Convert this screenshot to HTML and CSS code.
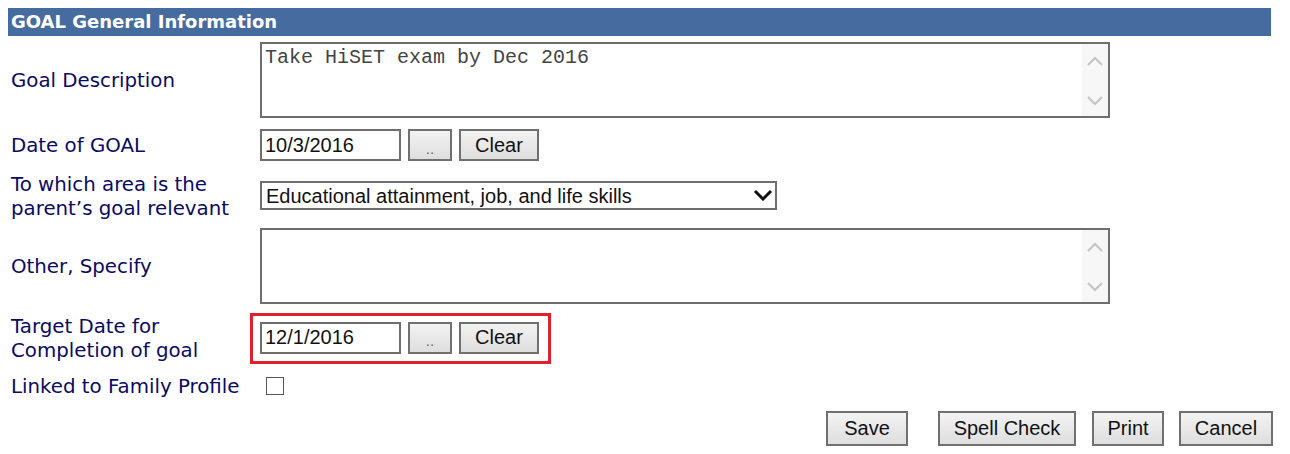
FILE: index.html
```html
<!DOCTYPE html>
<html lang="en">
<head>
  <meta charset="UTF-8" />
  <title>GOAL General Information</title>
  <link rel="stylesheet" href="styles.css">
</head>
<body>

<div class="section-head">GOAL General Information</div>

<div class="row row-desc">
  <div class="label">Goal Description</div>
  <div class="memo">
    <textarea class="memo-text">Take HiSET exam by Dec 2016</textarea>
    <div class="memo-scroll">
      <svg width="16" height="10" viewBox="0 0 16 10"><path d="M1 9 L8 2 L15 9" fill="none" stroke="#c4c4c4" stroke-width="2"/></svg>
      <svg width="16" height="10" viewBox="0 0 16 10"><path d="M1 1 L8 8 L15 1" fill="none" stroke="#c4c4c4" stroke-width="2"/></svg>
    </div>
  </div>
</div>

<div class="row row-date">
  <div class="label">Date of GOAL</div>
  <div class="date-group">
    <input type="text" class="date-input" value="10/3/2016" />
    <button class="btn btn-pick">..</button>
    <button class="btn btn-clear">Clear</button>
  </div>
</div>

<div class="row row-area">
  <div class="label">To which area is the<br>parent&#8217;s goal relevant</div>
  <div class="select-wrap">
    <select class="area-select">
      <option>Educational attainment, job, and life skills</option>
    </select>
    <svg class="select-arrow" width="20" height="12" viewBox="0 0 20 12"><path d="M2 2 L10 10 L18 2" fill="none" stroke="#111" stroke-width="3"/></svg>
  </div>
</div>

<div class="row row-other">
  <div class="label">Other, Specify</div>
  <div class="memo">
    <textarea class="memo-text"></textarea>
    <div class="memo-scroll">
      <svg width="16" height="10" viewBox="0 0 16 10"><path d="M1 9 L8 2 L15 9" fill="none" stroke="#c4c4c4" stroke-width="2"/></svg>
      <svg width="16" height="10" viewBox="0 0 16 10"><path d="M1 1 L8 8 L15 1" fill="none" stroke="#c4c4c4" stroke-width="2"/></svg>
    </div>
  </div>
</div>

<div class="row row-target">
  <div class="label">Target Date for<br>Completion of goal</div>
  <div class="date-group highlight">
    <input type="text" class="date-input" value="12/1/2016" />
    <button class="btn btn-pick">..</button>
    <button class="btn btn-clear">Clear</button>
  </div>
</div>

<div class="row row-linked">
  <div class="label">Linked to Family Profile</div>
  <span class="check"></span>
</div>

<div class="actions">
  <button class="btn btn-save">Save</button>
  <button class="btn btn-spell">Spell Check</button>
  <button class="btn btn-print">Print</button>
  <button class="btn btn-cancel">Cancel</button>
</div>

</body>
</html>
```

FILE: styles.css
```css
body {
  margin: 8px;
  background-color: #fff;
  font-family: "DejaVu Sans", Verdana, sans-serif;
}

.section-head {
  width: 1263px;
  height: 28px;
  box-sizing: border-box;
  padding: 3px 0 0 3px;
  background-color: #466c9f;
  color: #fff;
  font-weight: bold;
  font-size: 18px;
  line-height: 22px;
}

.row {
  display: flex;
  align-items: center;
}

.label {
  width: 249px;
  padding: 2px 0 0 3px;
  color: #0a0a62;
  font-size: 19.8px;
  line-height: 24px;
}

.row-desc { height: 88px; }
.row-date { height: 42px; }
.row-area { height: 59px; }
.row-other { height: 82px; }
.row-target { height: 62px; }
.row-linked { height: 34px; }

.memo {
  display: flex;
  width: 850px;
  height: 76px;
  box-sizing: border-box;
  border: 2px solid #6e6e6e;
  background: #fff;
}

.memo-text {
  flex: 1;
  border: none;
  resize: none;
  outline: none;
  padding: 3px 3px;
  font-family: "Liberation Mono", "Courier New", monospace;
  font-size: 20px;
  line-height: 22px;
  color: #444;
}

.memo-scroll {
  width: 26px;
  background-color: #f7f7f7;
  display: flex;
  flex-direction: column;
  justify-content: space-between;
  align-items: center;
  padding: 12px 0 10px;
  box-sizing: border-box;
}

.date-group {
  display: flex;
  align-items: center;
  gap: 7px;
}

.date-input {
  width: 141px;
  height: 32px;
  box-sizing: border-box;
  border: 2px solid #6e6e6e;
  padding: 0 3px;
  font-family: "Liberation Sans", Arial, sans-serif;
  font-size: 20px;
  color: #111;
}

.btn {
  height: 35px;
  box-sizing: border-box;
  border: 2px solid #707070;
  border-radius: 0;
  background: linear-gradient(#f3f3f3, #dedede);
  font-family: "Liberation Sans", Arial, sans-serif;
  font-size: 20px;
  color: #111;
  padding: 0;
  cursor: pointer;
}

.date-group .btn { height: 32px; }
.btn-pick { width: 44px; font-size: 15px; color: #666; padding-top: 6px; }
.btn-clear { width: 80px; }

.highlight {
  margin-left: -10px;
  border: 3px solid #e2202d;
  padding: 6px 9px 7px 7px;
}

.select-wrap {
  position: relative;
  width: 517px;
}

.area-select {
  width: 100%;
  height: 29px;
  box-sizing: border-box;
  border: 2px solid #6e6e6e;
  border-radius: 0;
  appearance: none;
  -webkit-appearance: none;
  background: #fff;
  padding: 0 4px;
  font-family: "Liberation Sans", Arial, sans-serif;
  font-size: 20px;
  color: #111;
}

.select-arrow {
  position: absolute;
  right: 4px;
  top: 8px;
  pointer-events: none;
}

.check {
  display: block;
  width: 18px;
  height: 18px;
  box-sizing: border-box;
  margin-left: 6px;
  border: 1px solid #555;
  background: #fff;
}

.actions {
  display: flex;
  width: 1265px;
  justify-content: flex-end;
  margin-top: 8px;
}

.btn-save { width: 82px; margin-right: 30px; }
.btn-spell { width: 138px; margin-right: 16px; }
.btn-print { width: 72px; margin-right: 15px; }
.btn-cancel { width: 94px; }
```
